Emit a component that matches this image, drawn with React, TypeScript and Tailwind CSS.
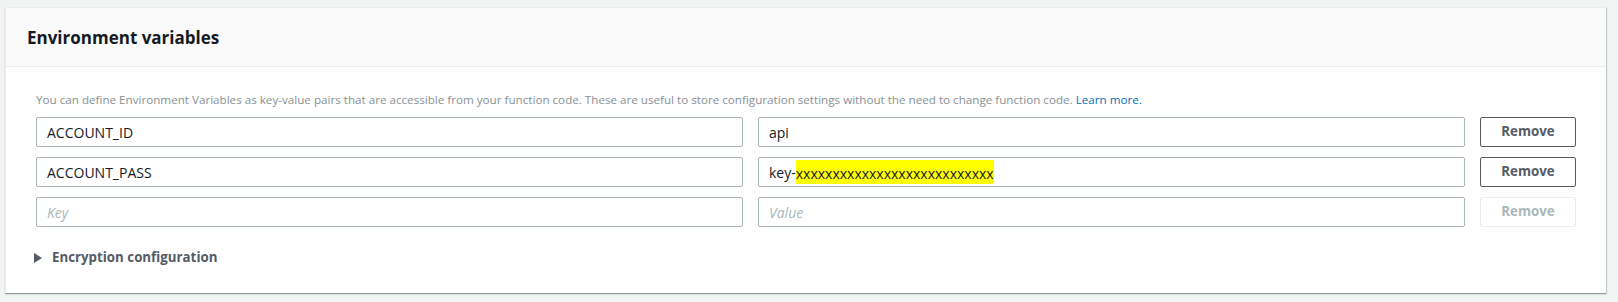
import React from "react";

const font = { fontFamily: '"Open Sans", "Noto Sans", Arial, sans-serif' };

function Field({ children, placeholder }: { children?: React.ReactNode; placeholder?: string }) {
  return (
    <div className="flex-1 h-[30px] border border-[#aab7b8] rounded-[2px] bg-white flex items-center px-[10px] text-[14px] text-[#16191f] whitespace-nowrap overflow-hidden">
      {children ?? <span className="italic text-[#aab7b8]">{placeholder}</span>}
    </div>
  );
}

function RemoveBtn({ disabled }: { disabled?: boolean }) {
  return (
    <button
      className={
        "w-[96px] h-[30px] rounded-[2px] border text-[13.3px] font-bold flex items-center justify-center " +
        (disabled ? "border-[#eaeded] text-[#aab7b8]" : "border-[#545b64] text-[#545b64]")
      }
    >
      Remove
    </button>
  );
}

export default function App() {
  return (
    <div className="w-[1618px] h-[302px] bg-[#f2f3f3] pt-[7px] pl-[5px] pr-[12px]" style={font}>
      <div className="bg-white border-t border-l border-[#eaeded] shadow-[0_1px_1px_0_rgba(0,28,36,0.3),1px_1px_1px_0_rgba(0,28,36,0.15)]">
        <div className="h-[59px] bg-[#fafafa] border-b border-[#eaeded] flex items-center pl-[21px]">
          <h2 className="text-[17px] font-bold text-[#16191f] leading-none">Environment variables</h2>
        </div>
        <div className="pl-[30px] pr-[30px] pt-[24px] pb-[25px]">
          <p className="text-[11.65px] leading-[18px] text-[#879196] mb-[8px]">
            You can define Environment Variables as key-value pairs that are accessible from your function code. These are useful to store configuration settings without the need to change function code.{" "}
            <a className="text-[#0073bb]">Learn more.</a>
          </p>
          <div className="flex flex-col gap-[10px]">
            <div className="flex gap-[15px]">
              <Field>ACCOUNT_ID</Field>
              <Field>api</Field>
              <RemoveBtn />
            </div>
            <div className="flex gap-[15px]">
              <Field>ACCOUNT_PASS</Field>
              <Field>
                key-<span className="bg-[#ffff00] pt-[3px]">xxxxxxxxxxxxxxxxxxxxxxxxxxx</span>
              </Field>
              <RemoveBtn />
            </div>
            <div className="flex gap-[15px]">
              <Field placeholder="Key" />
              <Field placeholder="Value" />
              <RemoveBtn disabled />
            </div>
          </div>
          <div className="mt-[21px] flex items-center h-[20px] -ml-[3px]">
            <svg width="10" height="10" viewBox="0 0 10 10" className="mr-[9px]">
              <path d="M1 0 L9 5 L1 10 Z" fill="#545b64" />
            </svg>
            <span className="text-[13.3px] font-bold text-[#545b64]">Encryption configuration</span>
          </div>
        </div>
      </div>
    </div>
  );
}
